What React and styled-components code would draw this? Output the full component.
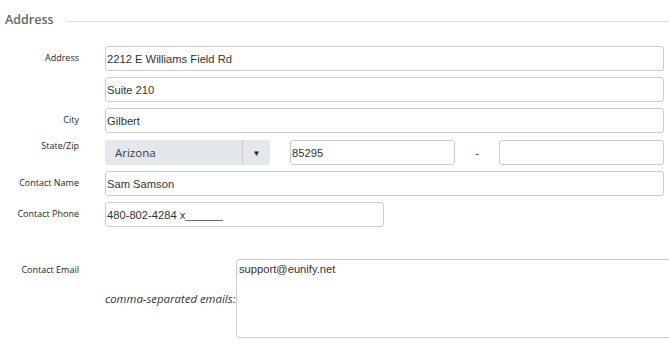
import React from "react";
import styled, { createGlobalStyle } from "styled-components";

const Global = createGlobalStyle`
  html, body {
    margin: 0;
    padding: 0;
    background: #fff;
    overflow: hidden;
  }
  body {
    font-family: "Open Sans", "Liberation Sans", sans-serif;
    color: #333;
  }
`;

const Page = styled.div`
  width: 669px;
  height: 350px;
  padding: 0 5px 0 0;
  box-sizing: border-box;
  overflow: hidden;
`;

const Legend = styled.div`
  display: flex;
  align-items: center;
  height: 46px;
  padding-left: 5px;
  padding-bottom: 6px;
  box-sizing: border-box;
  margin-right: -5px;

  h2 {
    margin: 0;
    font-size: 12.5px;
    font-weight: 600;
    color: #666;
    line-height: 1;
  }

  &::after {
    content: "";
    flex: 1;
    height: 1px;
    margin-left: 12px;
    margin-top: 2px;
    background: #d6e2f0;
  }
`;

const Row = styled.div`
  display: grid;
  grid-template-columns: 79px 1fr;
  column-gap: 26px;
  margin-top: ${p => p.$gap ?? 6}px;
`;

const Label = styled.label`
  font-size: 9px;
  line-height: 12px;
  text-align: right;
  color: #1e1e1e;
  padding-top: ${p => p.$top ?? 6}px;
  white-space: nowrap;
`;

const Input = styled.input`
  display: block;
  box-sizing: border-box;
  width: ${p => p.$width || "100%"};
  height: 25px;
  margin: 0;
  padding: 0 1px;
  border: 1px solid #ccc;
  border-radius: 3px;
  background: #fff;
  font-family: "Liberation Sans", Arial, sans-serif;
  font-size: 11.2px;
  color: #333;
  outline: none;
`;

const Inline = styled.div`
  display: flex;
  align-items: center;
`;

const Select = styled.div`
  display: flex;
  align-items: stretch;
  width: 165px;
  height: 25px;
  margin-right: 20px;
  border-radius: 3px;
  background: #e4e7eb;
  font-size: 11.5px;
  color: #3a3a3a;

  span {
    flex: 1;
    display: flex;
    align-items: center;
    padding-left: 10px;
  }

  i {
    width: 27px;
    border-left: 1px solid #ccc;
    display: flex;
    align-items: center;
    justify-content: center;
    font-style: normal;
    font-size: 8px;
    color: #222;
  }
`;

const Dash = styled.span`
  width: 44px;
  text-align: center;
  font-family: "Liberation Sans", Arial, sans-serif;
  font-size: 11px;
  color: #333;
`;

const EmailBox = styled.div`
  display: flex;
  align-items: center;
  margin-right: -40px;

  em {
    width: 131px;
    font-size: 11.4px;
    color: #333;
    white-space: nowrap;
  }
`;

const TextArea = styled.textarea`
  box-sizing: border-box;
  width: 480px;
  height: 79px;
  margin: 0;
  padding: 3px 2px;
  border: 1px solid #ccc;
  border-radius: 3px;
  resize: none;
  font-family: "Liberation Sans", Arial, sans-serif;
  font-size: 11.2px;
  color: #333;
  outline: none;
`;

export default function App() {
  return (
    <>
      <Global />
      <Page>
        <Legend>
          <h2>Address</h2>
        </Legend>

        <Row $gap={0}>
          <Label>Address</Label>
          <Input defaultValue="2212 E Williams Field Rd" />
        </Row>
        <Row>
          <Label />
          <Input defaultValue="Suite 210" />
        </Row>
        <Row>
          <Label>City</Label>
          <Input defaultValue="Gilbert" />
        </Row>
        <Row $gap={7}>
          <Label $top={0}>State/Zip</Label>
          <Inline>
            <Select>
              <span>Arizona</span>
              <i>▼</i>
            </Select>
            <Input $width="165px" defaultValue="85295" />
            <Dash>-</Dash>
            <Input $width="165px" defaultValue="" />
          </Inline>
        </Row>
        <Row>
          <Label>Contact Name</Label>
          <Input defaultValue="Sam Samson" />
        </Row>
        <Row>
          <Label>Contact Phone</Label>
          <Input $width="279px" defaultValue="480-802-4284 x______" />
        </Row>
        <Row $gap={32}>
          <Label $top={5}>Contact Email</Label>
          <EmailBox>
            <em>comma-separated emails:</em>
            <TextArea defaultValue="support@eunify.net" />
          </EmailBox>
        </Row>
      </Page>
    </>
  );
}
